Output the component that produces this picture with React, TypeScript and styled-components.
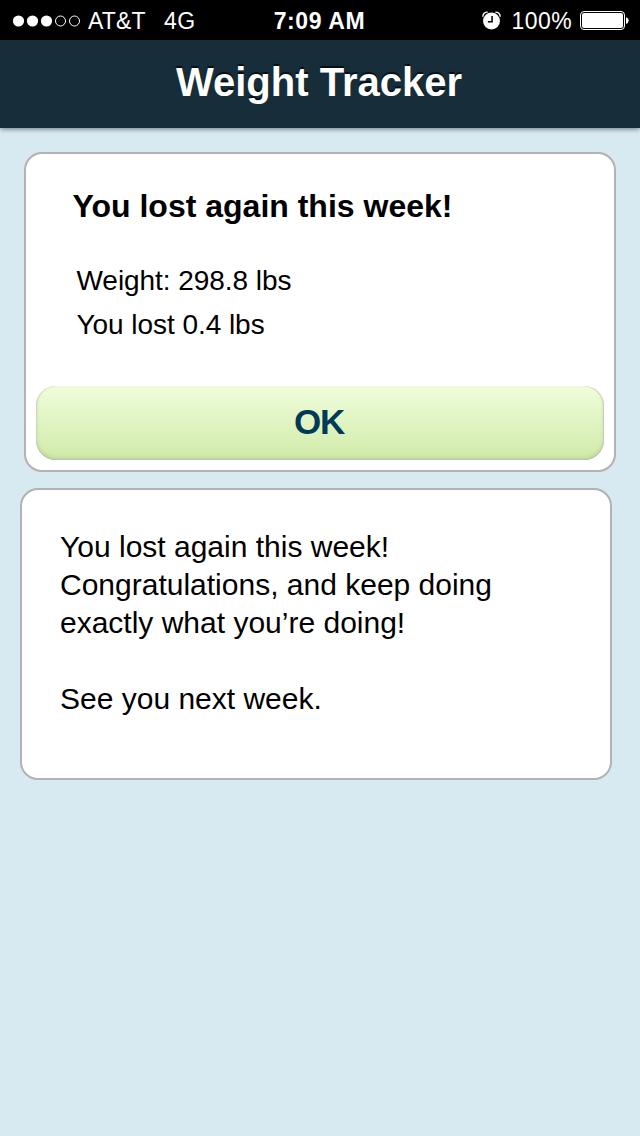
import React from "react";
import styled, { createGlobalStyle } from "styled-components";

const GlobalStyle = createGlobalStyle`
  * { box-sizing: border-box; }
  body {
    margin: 0;
    background: #d8eaf1;
    font-family: "Liberation Sans", Helvetica, Arial, sans-serif;
    color: #000;
  }
`;

const Screen = styled.div`
  display: flex;
  flex-direction: column;
  width: 640px;
  height: 1136px;
  overflow: hidden;
  background: #d8eaf1;
`;

const StatusBar = styled.div`
  display: grid;
  grid-template-columns: 1fr auto 1fr;
  align-items: center;
  height: 40px;
  padding: 0 11px 0 12px;
  background: #000;
  color: #fff;
  font-size: 23px;
  line-height: 40px;
`;

const StatusGroup = styled.div<{ $end?: boolean }>`
  display: flex;
  align-items: center;
  justify-content: ${(p) => (p.$end ? "flex-end" : "flex-start")};
`;

const StatusText = styled.span<{ $left?: number; $right?: number; $spacing?: number }>`
  margin-left: ${(p) => p.$left ?? 0}px;
  margin-right: ${(p) => p.$right ?? 0}px;
  letter-spacing: ${(p) => p.$spacing ?? 0}px;
  padding-top: 1px;
  white-space: nowrap;
`;

const Clock = styled.span`
  padding: 1px 2px 0 0;
  font-weight: bold;
  letter-spacing: 0.6px;
`;

const Header = styled.header`
  flex: none;
  height: 88px;
  background: #172e3a;
  box-shadow: 0 1px 5px rgba(0, 0, 0, 0.5);
`;

const Title = styled.h1`
  margin: 0;
  padding-right: 2px;
  color: #fff;
  font-size: 40px;
  line-height: 85px;
  text-align: center;
  text-shadow: 0 -2px 1px rgba(0, 0, 0, 0.7);
`;

const Main = styled.main`
  display: flex;
  flex-direction: column;
  gap: 16px;
  padding: 24px 24px 0 20px;
`;

const Card = styled.section`
  width: 592px;
  border: 2px solid #b2b2b2;
  border-radius: 18px;
  background: #fff;
`;

const ResultCard = styled(Card)`
  display: flex;
  flex-direction: column;
  height: 320px;
  margin-left: 4px;
  padding: 32px 10px 10px;
`;

const MessageCard = styled(Card)`
  height: 292px;
  padding: 38px;
  font-size: 30px;
  line-height: 38px;
`;

const Heading = styled.h2`
  margin: 0 0 33px 36.5px;
  font-size: 32px;
  line-height: 40px;
`;

const Reading = styled.p`
  margin: 0 0 0 40.5px;
  font-size: 28px;
  line-height: 44px;
  letter-spacing: -0.05px;
`;

const Message = styled.p<{ $gap?: number }>`
  margin: 0 0 ${(p) => p.$gap ?? 0}px;
  white-space: nowrap;
`;

const OkButton = styled.button`
  height: 74px;
  margin-top: auto;
  padding: 0 2px 3px 0;
  border: 0;
  border-radius: 20px;
  background: linear-gradient(#f0fddc, #d0eba8);
  box-shadow:
    inset 0 -1px 0 #bfc4bb,
    inset 1px 0 0 #cdd2c8,
    inset -1px 0 0 #c6cac2,
    inset 0 -2px 4px rgba(100, 130, 60, 0.25);
  color: #003a57;
  font-family: inherit;
  font-size: 35px;
  font-weight: bold;
  letter-spacing: -1.3px;
`;

const SignalDots = () => (
  <svg width="70" height="14" viewBox="0 0 70 14">
    {[7, 21, 35].map((x) => (
      <circle key={x} cx={x - 0.5} cy="7" r="5.6" fill="#fff" />
    ))}
    {[49, 63].map((x) => (
      <circle key={x} cx={x - 0.5} cy="7" r="5" fill="none" stroke="#fff" strokeWidth="1" />
    ))}
  </svg>
);

const AlarmIcon = () => (
  <svg width="19" height="19" viewBox="0 0 20 20">
    <circle cx="10" cy="10.6" r="8.9" fill="#fff" />
    <path d="M0.8 6C1 3 3 1.2 6 1.2M19.2 6C19 3 17 1.2 14 1.2" fill="none" stroke="#fff" strokeWidth="1.5" />
    <path d="M10.6 5.3V11.4H6.2" fill="none" stroke="#000" strokeWidth="1.6" />
  </svg>
);

const BatteryIcon = () => (
  <svg width="49" height="20" viewBox="0 0 49 20">
    <rect x="0.5" y="0.5" width="44" height="18" rx="3.5" fill="none" stroke="#fff" />
    <rect x="2" y="2" width="41" height="15" rx="2" fill="#fff" />
    <path d="M46 6.3Q48.7 7.2 48.7 9.6T46 12.9Z" fill="#fff" />
  </svg>
);

export default function App() {
  return (
    <>
      <GlobalStyle />
      <Screen>
        <StatusBar>
          <StatusGroup>
            <SignalDots />
            <StatusText $left={6} $spacing={0.2}>AT&amp;T</StatusText>
            <StatusText $left={18} $spacing={0.6}>4G</StatusText>
          </StatusGroup>
          <Clock>7:09 AM</Clock>
          <StatusGroup $end>
            <AlarmIcon />
            <StatusText $left={11} $right={8} $spacing={0.4}>100%</StatusText>
            <BatteryIcon />
          </StatusGroup>
        </StatusBar>
        <Header>
          <Title>Weight Tracker</Title>
        </Header>
        <Main>
          <ResultCard>
            <Heading>You lost again this week!</Heading>
            <Reading>Weight: 298.8 lbs</Reading>
            <Reading>You lost 0.4 lbs</Reading>
            <OkButton>OK</OkButton>
          </ResultCard>
          <MessageCard>
            <Message>You lost again this week!</Message>
            <Message $gap={38}>
              Congratulations, and keep doing
              <br />
              exactly what you’re doing!
            </Message>
            <Message>See you next week.</Message>
          </MessageCard>
        </Main>
      </Screen>
    </>
  );
}
